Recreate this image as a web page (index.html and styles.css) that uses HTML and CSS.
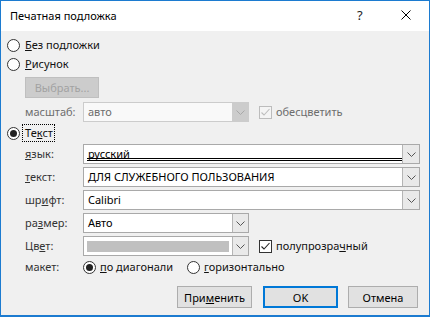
FILE: index.html
```html
<!DOCTYPE html>
<html>
<head>
<meta charset="utf-8">
<link rel="stylesheet" href="styles.css">
</head>
<body>
<div class="window">
  <div class="titlebar">
    <span class="title">Печатная подложка</span>
    <span class="help">?</span>
    <svg class="close" width="10" height="10" viewBox="0 0 10 10"><path d="M0.5 0.5L9.5 9.5M9.5 0.5L0.5 9.5" stroke="#000" stroke-width="1" fill="none"/></svg>
  </div>
  <div class="content">
    <div class="row r-none">
      <span class="radio"></span><span class="lbl"><u>Б</u>ез подложки</span>
    </div>
    <div class="row r-pic">
      <span class="radio"></span><span class="lbl"><u>Р</u>исунок</span>
    </div>
    <div class="row r-btn">
      <span class="btn-dis">Выбрать...</span>
    </div>
    <div class="row r-field r-scale">
      <span class="flabel dis">масштаб:</span>
      <div class="combo short disabled"><span class="val">авто</span><span class="arrow"><svg width="9" height="5" viewBox="0 0 9 5"><path d="M0.5 0.5L4.5 4.5L8.5 0.5" stroke="#a8a8a8" fill="none"/></svg></span></div>
      <span class="check disabled"><svg width="11" height="11" viewBox="0 0 11 11"><path d="M1.5 5.5L4 8L9.5 2" stroke="#bdbdbd" stroke-width="1.1" fill="none"/></svg></span><span class="clabel dis">обесцветить</span>
    </div>
    <div class="row r-text">
      <span class="radio on"></span><span class="lbl focus">Те<u>к</u>ст</span>
    </div>
    <div class="row r-field">
      <span class="flabel"><u>я</u>зык:</span>
      <div class="combo long"><span class="val lang">русский</span><span class="dbl"></span><span class="arrow"><svg width="9" height="5" viewBox="0 0 9 5"><path d="M0.5 0.5L4.5 4.5L8.5 0.5" stroke="#555" fill="none"/></svg></span></div>
    </div>
    <div class="row r-field">
      <span class="flabel"><u>т</u>екст:</span>
      <div class="combo long"><span class="val">ДЛЯ СЛУЖЕБНОГО ПОЛЬЗОВАНИЯ</span><span class="arrow"><svg width="9" height="5" viewBox="0 0 9 5"><path d="M0.5 0.5L4.5 4.5L8.5 0.5" stroke="#555" fill="none"/></svg></span></div>
    </div>
    <div class="row r-field">
      <span class="flabel">шр<u>и</u>фт:</span>
      <div class="combo long"><span class="val">Calibri</span><span class="arrow"><svg width="9" height="5" viewBox="0 0 9 5"><path d="M0.5 0.5L4.5 4.5L8.5 0.5" stroke="#555" fill="none"/></svg></span></div>
    </div>
    <div class="row r-field">
      <span class="flabel">ра<u>з</u>мер:</span>
      <div class="combo short"><span class="val">Авто</span><span class="arrow"><svg width="9" height="5" viewBox="0 0 9 5"><path d="M0.5 0.5L4.5 4.5L8.5 0.5" stroke="#555" fill="none"/></svg></span></div>
    </div>
    <div class="row r-field">
      <span class="flabel">Цв<u>е</u>т:</span>
      <div class="combo short"><span class="swatch"></span><span class="arrow"><svg width="9" height="5" viewBox="0 0 9 5"><path d="M0.5 0.5L4.5 4.5L8.5 0.5" stroke="#555" fill="none"/></svg></span></div>
      <span class="check"><svg width="11" height="11" viewBox="0 0 11 11"><path d="M1.5 5.5L4 8L9.5 2" stroke="#222" stroke-width="1.1" fill="none"/></svg></span><span class="clabel">полупрозра<u>ч</u>ный</span>
    </div>
    <div class="row r-layout">
      <span class="flabel">макет:</span>
      <span class="radio on"></span><span class="lbl"><u>п</u>о диагонали</span>
      <span class="radio r2"></span><span class="lbl"><u>г</u>оризонтально</span>
    </div>
    <div class="buttons">
      <span class="btn b-apply">При<u>м</u>енить</span>
      <span class="btn b-ok">OK</span>
      <span class="btn b-cancel">Отмена</span>
    </div>
  </div>
</div>
</body>
</html>
```

FILE: styles.css
```css
html, body {
  margin: 0;
  padding: 0;
  background: #ffffff;
}
.window {
  width: 430px;
  height: 317px;
  box-sizing: border-box;
  border: 1px solid #1c7bd0;
  border-bottom-width: 2px;
  background: #f0f0f0;
  font-family: "Noto Sans", "Liberation Sans", sans-serif;
  font-size: 11px;
  color: #000;
  display: flex;
  flex-direction: column;
}
.titlebar {
  height: 30px;
  background: #ffffff;
  display: flex;
  align-items: center;
  padding-left: 9px;
  position: relative;
}
.title {
  font-size: 11px;
  color: #000;
  line-height: 16px;
  margin-top: -1px;
}
.help {
  position: absolute;
  left: 356px;
  top: 6px;
  font-size: 13px;
  line-height: 16px;
  color: #222;
}
.close {
  position: absolute;
  left: 400px;
  top: 9px;
}
.content {
  padding-left: 6px;
  display: flex;
  flex-direction: column;
}
.row {
  display: flex;
  align-items: center;
  height: 16px;
  line-height: 16px;
  white-space: nowrap;
}
.r-none { margin-top: 6px; }
.r-pic { margin-top: 3px; }
.r-btn { margin-top: 5px; height: 21px; padding-left: 18px; }
.r-field { height: 20px; margin-top: 3px; }
.r-scale { margin-top: 4px; }
.r-text { margin-top: 3px; }
.r-layout { margin-top: 3px; }
.radio {
  width: 11px;
  height: 11px;
  border: 1px solid #333;
  border-radius: 50%;
  background: #fff;
  box-sizing: content-box;
  position: relative;
  flex: none;
}
.radio.on::after {
  content: "";
  position: absolute;
  left: 2px;
  top: 2px;
  width: 7px;
  height: 7px;
  border-radius: 50%;
  background: #222;
}
.lbl {
  margin-left: 5px;
  color: #111;
}
.focus {
  outline: 1px dotted #000;
  outline-offset: 0;
  margin-left: 3px;
  padding: 0 1px 0 2px;
}
.r-layout .radio { margin-left: 0; }
.r-layout .r2 { margin-left: 14px; }
.r-layout .lbl { margin-left: 4px; }
.btn-dis {
  width: 74px;
  height: 21px;
  box-sizing: border-box;
  background: #cccccc;
  border: 1px solid #bfbfbf;
  color: #a2a2a2;
  display: flex;
  align-items: center;
  justify-content: center;
}
.flabel {
  width: 58px;
  margin-left: 18px;
  color: #333;
  flex: none;
}
.flabel.dis { color: #6d6d6d; }
.combo {
  height: 20px;
  box-sizing: border-box;
  border: 1px solid #a9a9a9;
  background: #fff;
  display: flex;
  align-items: center;
  position: relative;
  flex: none;
}
.combo.long { width: 337px; }
.combo.short { width: 166px; }
.combo .val {
  flex: 1;
  padding-left: 4px;
  color: #000;
}
.combo .arrow {
  width: 16px;
  height: 18px;
  box-sizing: border-box;
  border-left: 1px solid #b5b5b5;
  background: #e9e9e9;
  display: flex;
  align-items: center;
  justify-content: center;
  flex: none;
}
.combo.long .arrow { width: 17px; }
.combo.disabled {
  border-color: #cccccc;
  background: #f9f9f9;
}
.combo.disabled .val { color: #6d6d6d; }
.combo.disabled .arrow {
  background: #cccccc;
  border-left-color: #cccccc;
}
.dbl {
  position: absolute;
  left: 3px;
  right: 17px;
  top: 13px;
  height: 0;
  border-bottom: 3px double #000;
}
.swatch {
  flex: 1;
  height: 11px;
  margin: 0 3px 0 3px;
  background: #c0c0c0;
}
.check {
  width: 11px;
  height: 11px;
  border: 1px solid #333;
  background: #fff;
  margin-left: 10px;
  display: flex;
  align-items: center;
  justify-content: center;
  flex: none;
}
.check.disabled {
  border-color: #bcbcbc;
  background: #f4f4f4;
}
.clabel {
  margin-left: 4px;
  color: #111;
}
.clabel.dis { color: #6d6d6d; }
.buttons {
  display: flex;
  margin-top: 11px;
  padding-left: 170px;
}
.btn {
  width: 75px;
  height: 22px;
  box-sizing: border-box;
  background: #e1e1e1;
  border: 1px solid #adadad;
  display: flex;
  align-items: center;
  justify-content: center;
  color: #000;
  flex: none;
}
.b-ok {
  margin-left: 11px;
  border: 2px solid #0078d7;
}
.b-cancel {
  margin-left: 10px;
  width: 70px;
}
```
